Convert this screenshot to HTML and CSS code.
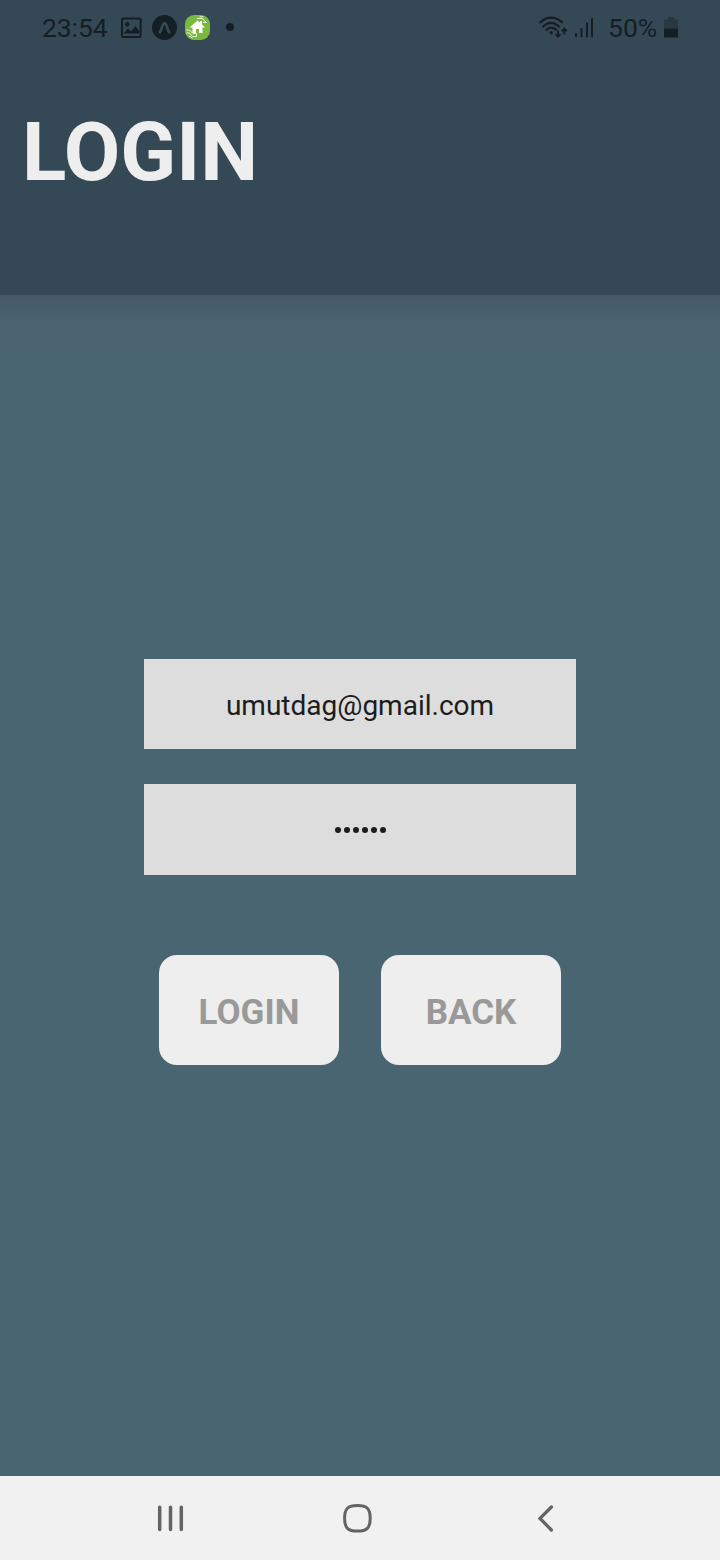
FILE: index.html
```
<!DOCTYPE html>
<html lang="en">
<head>
<meta charset="utf-8">
<title>Login</title>
<link rel="stylesheet" href="styles.css">
</head>
<body>
<div class="screen">
  <header class="header">
    <div class="status">
      <span class="time">23:54</span>
      <svg class="photo-icon" width="22" height="22" viewBox="0 0 22 22"><rect x="2" y="1.500" width="18.600" height="18.600" rx="1" fill="none" stroke="currentColor" stroke-width="2"/><circle cx="7.300" cy="7.300" r="2.200" fill="currentColor"/><path d="M3.500 16.500 8 11.500l3 3L15.500 9l4 5.500v2z" fill="currentColor"/></svg>
      <svg class="expo-icon" width="25" height="26" viewBox="0 0 25 26"><circle cx="12.5" cy="12.500" r="12.5" fill="currentColor"/><path d="M7.800 17.300C9.900 14.500 10.400 8.200 12.500 8.200S15.100 14.500 17.200 17.300" fill="none" stroke="#354855" stroke-width="2.700" stroke-linecap="round"/></svg>
      <svg class="home-icon" width="26" height="26" viewBox="0 0 26 26"><rect x="0" y="0" width="25" height="25" rx="9" fill="#7bb83e"/><path d="M4.500 12.500 12.500 5.500 15 7.700V6h2v3.500l3 3h-2.500V18H14v-4h-3v4H7.500v-5.500z" fill="#fff"/><path d="M12 3.500h5l4 3.500M14.500 1.800h4M18 7.500h4M1.500 15h3l3.500 3.500h3.500v3M1.500 18h3l3 3.500h4M4 21.500h1.500l2 2" fill="none" stroke="#e7f7d9" stroke-width="1"/></svg>
      <span class="dot"></span>
      <svg class="wifi-icon" width="30" height="24" viewBox="0 0 30 24" fill="none" stroke="currentColor"><path d="M1.300 6.300Q12-2.900 23 6.100M4.200 10.500Q12 3.100 20 10.500M7.500 13.800Q12 9.700 17 13.500" stroke-width="2.200" stroke-linecap="round"/><circle cx="12.200" cy="16.700" r="1.700" fill="currentColor" stroke="none"/><path d="M19 14.500v6M16.400 18.100 19 20.700 21.600 18.100M25.300 18.500v-6M22.700 15.100 25.300 12.500 27.900 15.100" stroke-width="1.900"/></svg>
      <svg class="signal-icon" width="20" height="22" viewBox="0 0 20 22" fill="none" stroke="currentColor" stroke-width="2" stroke-linecap="round"><path d="M2 17V19.500M7.500 12V19.500M13 6.500V19.500M18 2V19.500"/></svg>
      <span class="percent">50%</span>
      <svg class="battery-icon" width="14" height="22" viewBox="0 0 14 22"><path d="M4 0h6v2.500h4V11.500H0V2.500h4z" fill="#263840"/><path d="M0 11.500h14v8q0 1-1 1H1Q0 20.500 0 19.500z" fill="#151e24"/></svg>
    </div>
    <h1 class="title">LOGIN</h1>
  </header>
  <main class="content">
    <div class="field email">umutdag@gmail.com</div>
    <div class="field password"><i></i><i></i><i></i><i></i><i></i><i></i></div>
    <div class="actions">
      <button class="button">LOGIN</button>
      <button class="button">BACK</button>
    </div>
  </main>
  <nav class="navbar">
    <svg class="recent" width="28" height="30" viewBox="0 0 28 30"><path d="M2.700 4.200V26.400M13.500 4.200V26.400M24.300 4.200V26.400" fill="none" stroke="#646464" stroke-width="3.500" stroke-linecap="round"/></svg>
    <svg class="home" width="32" height="32" viewBox="0 0 32 32"><path d="M16.400 3.500C25.900 3.500 29.200 6.600 29.200 16.300S25.900 29.100 16.400 29.100 3.600 26 3.600 16.300 6.900 3.500 16.400 3.500z" fill="none" stroke="#646464" stroke-width="3"/></svg>
    <svg class="back" width="20" height="30" viewBox="0 0 20 30"><path d="M15.400 4 4 15.400 15.400 27" fill="none" stroke="#646464" stroke-width="3.300" stroke-linecap="round"/></svg>
  </nav>
</div>
</body>
</html>
```
FILE: styles.css
```
* { box-sizing: border-box; }
body { margin: 0; font-family: Roboto, sans-serif; }
.screen { width: 720px; height: 1560px; display: flex; flex-direction: column; background: #4a6572; }
.header { height: 295px; background: #354855; }
.status { height: 55px; padding: 0 42px; display: flex; align-items: center; color: #151e24; font-size: 26.500px; line-height: 32px; }
.status svg { display: block; flex: none; }
.time { width: 66px; margin-right: 12px; padding-top: 1px; letter-spacing: -0.100px; }
.expo-icon { margin-left: 10px; }
.home-icon { margin-left: 8px; }
.dot { width: 8px; height: 8px; margin: 0 0 1px 15px; border-radius: 50%; background: currentColor; }
.wifi-icon { margin-left: auto; }
.signal-icon { margin-left: 5px; }
.percent { width: 49px; margin: 0 7px 0 14px; padding-top: 1px; }
.title { margin: 49px 0 0 22px; font-size: 82px; line-height: 97px; font-weight: 700; color: #eee; }
.content { flex: 1; padding-top: 364px; display: flex; flex-direction: column; align-items: center; background: linear-gradient(#455a66 0, #4a6370 28px, #4a6572 60px); }
.field { width: 432px; height: 90px; display: flex; align-items: center; justify-content: center; background: #ddd; color: #1c1c1c; font-size: 28px; }
.email { padding-top: 2px; }
.password { height: 91px; margin-top: 35px; gap: 3px; }
.password i { width: 6px; height: 6px; border-radius: 50%; background: #1c1c1c; }
.actions { margin-top: 80px; display: flex; gap: 42px; }
.button { width: 180px; height: 110px; padding: 6px 0 0; border: 0; border-radius: 18px; background: #eee; color: #999; font: 700 35px/42px Roboto, sans-serif; }
.navbar { height: 84px; display: flex; align-items: center; padding: 0 0 0 157px; background: #f1f1f1; }
.home { margin-left: 156px; }
.back { margin-left: 163px; }
```
